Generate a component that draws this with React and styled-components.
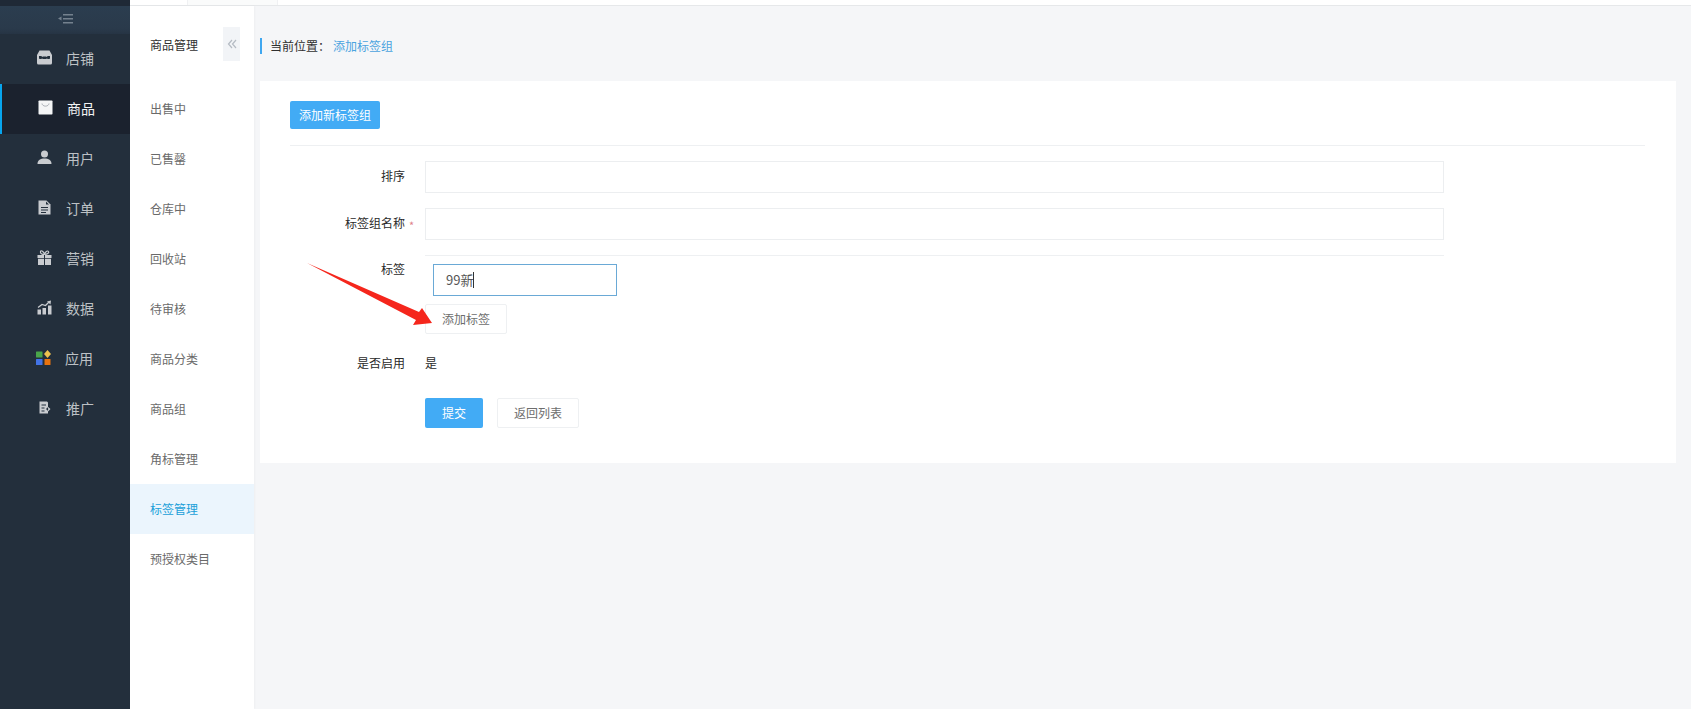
import React from "react";
import styled, { createGlobalStyle } from "styled-components";

const GlobalStyle = createGlobalStyle`
  html, body {
    margin: 0;
    padding: 0;
    height: 100%;
    overflow: hidden;
    background: #f5f6f8;
    font-family: "Noto Sans CJK SC", "Noto Sans", sans-serif;
    font-size: 12px;
  }
  * {
    box-sizing: border-box;
  }
`;

const Page = styled.div`
  position: relative;
  display: flex;
  width: 1691px;
  height: 709px;
  overflow: hidden;
`;

const Sidebar = styled.aside`
  flex: 0 0 130px;
  background: #232f3c;
  border-top: 6px solid #1f2936;
`;

const Collapse = styled.div`
  height: 28px;
  display: flex;
  align-items: center;
  justify-content: center;
  padding-bottom: 3px;
  background: linear-gradient(#2b3d4f, #2a3a4b 80%, #263444);
  color: #74818e;
`;

const NavItem = styled.div`
  height: 50px;
  display: flex;
  align-items: center;
  padding-bottom: 3px;
  gap: 14px;
  font-size: 14px;
  color: ${({ $active }) => ($active ? "#f2f3f4" : "#bdc1c5")};
  background: ${({ $active }) => ($active ? "#1b222e" : "transparent")};
  border-left: ${({ $active }) => ($active ? "2px solid #07a5ee" : "0")};
  padding-left: ${({ $active, $left }) => ($active ? "36px" : `${$left || 37}px`)};
`;

const NavIcon = styled.svg`
  width: 15px;
  height: 15px;
  flex: none;
`;

const Main = styled.div`
  flex: 1;
  display: flex;
  flex-direction: column;
  min-width: 0;
`;

const TopBar = styled.div`
  height: 6px;
  flex: none;
  display: flex;
  background: #fff;
  border-bottom: 1px solid #e6e8ea;
`;

const TopTab = styled.div`
  width: ${({ $w }) => $w}px;
  border-right: 1px solid #f0f1f3;
  background: ${({ $muted }) => ($muted ? "#fafbfb" : "#fff")};
`;

const Body = styled.div`
  flex: 1;
  display: flex;
  min-height: 0;
`;

const SubNav = styled.nav`
  position: relative;
  flex: 0 0 124px;
  background: #fff;
  box-shadow: 1px 0 2px rgba(0, 0, 0, 0.03);
`;

const SubTitle = styled.div`
  height: 78px;
  padding: 31px 0 0 20px;
  line-height: 16px;
  color: #303030;
`;

const SubItem = styled.div`
  height: 50px;
  display: flex;
  align-items: center;
  padding: 0 0 2px 20px;
  color: ${({ $active }) => ($active ? "#1a9fd9" : "#6a6a6a")};
  background: ${({ $active }) => ($active ? "#ebf5fd" : "transparent")};
`;

const FoldButton = styled.div`
  position: absolute;
  top: 21px;
  right: 14px;
  width: 17px;
  height: 34px;
  display: flex;
  align-items: center;
  justify-content: center;
  background: #f2f4f7;
  color: #b5bbc3;
`;

const Content = styled.main`
  flex: 1;
  min-width: 0;
  padding: 32px 15px 0 6px;
`;

const Crumb = styled.div`
  height: 16px;
  display: flex;
  align-items: center;
  border-left: 2px solid #3fa7f0;
  padding: 0 0 2px 8px;
  color: #303030;
  margin-bottom: 27px;
`;

const CrumbLink = styled.span`
  margin-left: 3px;
  color: #4aa3df;
`;

const Card = styled.section`
  height: 382px;
  background: #fff;
  padding: 20px 30px 0;
`;

const Button = styled.div`
  display: inline-flex;
  align-items: center;
  justify-content: center;
  width: ${({ $w }) => $w}px;
  height: ${({ $h }) => $h || 30}px;
  padding-bottom: 1px;
  border-radius: 2px;
  background: ${({ $primary }) => ($primary ? "#42abf5" : "#fff")};
  color: ${({ $primary }) => ($primary ? "#fff" : "#6d6d6d")};
  border: ${({ $primary }) => ($primary ? "0" : "1px solid #eef0f2")};
`;

const Divider = styled.div`
  height: 1px;
  background: #eef0f2;
`;

const HeadDivider = styled(Divider)`
  margin: 16px 0 15px;
  width: 1355px;
`;

const Row = styled.div`
  display: flex;
  margin-bottom: ${({ $gap }) => $gap || 15}px;
  margin-top: ${({ $mt }) => $mt || 0}px;
  align-items: ${({ $top }) => ($top ? "flex-start" : "center")};
`;

const Label = styled.label`
  flex: 0 0 115px;
  text-align: right;
  color: #2a2a2a;
  line-height: 16px;
  margin-right: 20px;
  position: relative;
  top: ${({ $up }) => $up || -1}px;
`;

const Star = styled.span`
  position: absolute;
  left: 119px;
  top: 2px;
  color: #e0808a;
  font-size: 11px;
`;

const Input = styled.div`
  width: 1019px;
  height: 32px;
  border: 1px solid #eceef0;
  background: #fff;
`;

const Field = styled.div`
  margin-left: 135px;
  width: 1019px;
`;

const TagColumn = styled.div`
  display: flex;
  flex-direction: column;
  align-items: flex-start;
`;

const TagInput = styled.div`
  width: 184px;
  height: 32px;
  margin-left: 8px;
  margin-bottom: 8px;
  border: 1px solid #6aa9d6;
  padding: 0 0 1px 12px;
  display: flex;
  align-items: center;
  font-size: 13px;
  color: #555;
`;

const Caret = styled.span`
  width: 1px;
  height: 16px;
  background: #333;
`;

const Value = styled.span`
  color: #2a2a2a;
  position: relative;
  top: -1px;
`;

const Actions = styled.div`
  display: flex;
  gap: 14px;
  margin-left: 135px;
`;

const Arrow = styled.svg`
  position: absolute;
  left: 300px;
  top: 255px;
  width: 145px;
  height: 80px;
  pointer-events: none;
`;

const icons = {
  shop: (
    <>
      <path fill="#c9ccd0" d="M2.500 0.500h10L15 5v8a1.500 1.500 0 0 1-1.500 1.500h-12A1.500 1.500 0 0 1 0 13V5z" />
      <path fill="#232f3c" d="M2 6h2.500l.5 1 1-.5h3l1 .5.500-1H13v2.500c-1 .8-2 .8-3 0-1 .8-4 .8-5 0-1 .8-2 .8-3 0z" />
    </>
  ),
  bag: (
    <>
      <rect x="0.500" y="0.500" width="14" height="14" rx="0.800" fill="#f4f5f6" />
      <path d="M4 3.500c.4 3.500 6.600 3.500 7 0" fill="none" stroke="#8b9199" strokeWidth="0.700" />
    </>
  ),
  user: (
    <>
      <circle cx="7.500" cy="4" r="3.500" fill="#c9ccd0" />
      <path fill="#c9ccd0" d="M0.500 14c0-4 3-5.500 7-5.500s7 1.500 7 5.500z" />
    </>
  ),
  order: (
    <>
      <path fill="#c9ccd0" d="M1.500 0.500h8l4 4v10h-12z" />
      <path fill="#232f3c" d="M4 7h7v1H4zM4 9.500h7v1H4zM4 12h5v1H4zM9 1.500v3h3z" />
    </>
  ),
  gift: (
    <>
      <path fill="#c9ccd0" d="M0.500 5h6.500v3H0.500zM8 5h6.500v3H8zM1 8.800h6V15H1zM8 8.800h6V15H8z" />
      <path fill="none" stroke="#c9ccd0" strokeWidth="1.200" d="M7.500 4.500C5 4.500 3 3.500 3.500 1.500S7 2 7.500 4.500C8 2 10.500 0 11.500 1.500S10 4.500 7.500 4.500z" />
    </>
  ),
  chart: (
    <>
      <path fill="#c9ccd0" d="M0.500 9.500h3.500v5H0.500zM5.500 8H9v6.500H5.500zM11 5.500h3.500v9H11z" />
      <path fill="none" stroke="#c9ccd0" strokeWidth="1.200" d="M1 7.500l4-3 3.500 1L12 2" />
      <path fill="#c9ccd0" d="M10 1.500L14 0.500l-.5 4z" />
    </>
  ),
  apps: (
    <>
      <rect x="0" y="1.500" width="6.500" height="6" rx="0.500" fill="#4aa54a" />
      <path d="M11.500 0l3.500 4-3.500 4-3.500-4z" fill="#eec24e" />
      <rect x="0" y="9" width="6.500" height="6" rx="0.500" fill="#4273e6" />
      <rect x="8.500" y="9" width="6" height="6" rx="0.500" fill="#e8730f" />
    </>
  ),
  promo: (
    <>
      <path fill="#c9ccd0" d="M2.500 1.500h7.500l1 1V7l-2 2 2 2v2.500H2.500z" />
      <path fill="#232f3c" d="M4.500 4.500h4.500v1H4.500zM4.500 7.500h3v1h-3zM4.500 10.500h3v1h-3z" />
      <path fill="#c9ccd0" d="M10.500 6.500l3 2.500-3 3 .8-3z" />
    </>
  ),
};

const navItems = [
  { key: "shop", label: "店铺" },
  { key: "bag", label: "商品", active: true },
  { key: "user", label: "用户" },
  { key: "order", label: "订单" },
  { key: "gift", label: "营销" },
  { key: "chart", label: "数据" },
  { key: "apps", label: "应用", left: 36 },
  { key: "promo", label: "推广" },
];

const subItems = [
  "出售中",
  "已售罄",
  "仓库中",
  "回收站",
  "待审核",
  "商品分类",
  "商品组",
  "角标管理",
  "标签管理",
  "预授权类目",
];

const App = () => (
  <Page>
    <GlobalStyle />
    <Sidebar>
      <Collapse>
        <svg width="15" height="10" viewBox="0 0 15 10" fill="currentColor">
          <path d="M5 0h10v1.500H5zM5 4h10v1.500H5zM5 8h10v1.500H5zM3.500 2.500v4L0 4.500z" />
        </svg>
      </Collapse>
      {navItems.map((item) => (
        <NavItem key={item.key} $active={item.active} $left={item.left}>
          <NavIcon viewBox="0 0 15 15">{icons[item.key]}</NavIcon>
          {item.label}
        </NavItem>
      ))}
    </Sidebar>
    <Main>
      <TopBar>
        <TopTab $w={58} />
        <TopTab $w={90} $muted />
      </TopBar>
      <Body>
        <SubNav>
          <SubTitle>商品管理</SubTitle>
          <FoldButton>
            <svg width="10" height="10" viewBox="0 0 10 10" fill="none" stroke="currentColor" strokeWidth="1.200">
              <path d="M5 1L1.500 5 5 9M9 1L5.500 5 9 9" />
            </svg>
          </FoldButton>
          {subItems.map((label) => (
            <SubItem key={label} $active={label === "标签管理"}>
              {label}
            </SubItem>
          ))}
        </SubNav>
        <Content>
          <Crumb>
            当前位置：<CrumbLink>添加标签组</CrumbLink>
          </Crumb>
          <Card>
            <Button $primary $w={90} $h={28}>
              添加新标签组
            </Button>
            <HeadDivider />
            <Row>
              <Label>排序</Label>
              <Input />
            </Row>
            <Row>
              <Label>
                标签组名称<Star>*</Star>
              </Label>
              <Input />
            </Row>
            <Field>
              <Divider />
            </Field>
            <Row $top $gap={21} $mt={8}>
              <Label $up={-3}>标签</Label>
              <TagColumn>
                <TagInput>
                  99新
                  <Caret />
                </TagInput>
                <Button $w={82}>添加标签</Button>
              </TagColumn>
            </Row>
            <Row $gap={26}>
              <Label>是否启用</Label>
              <Value>是</Value>
            </Row>
            <Actions>
              <Button $primary $w={58}>
                提交
              </Button>
              <Button $w={82}>返回列表</Button>
            </Actions>
          </Card>
        </Content>
      </Body>
    </Main>
    <Arrow viewBox="0 0 145 80">
      <path fill="#f5261c" d="M7 8L119 57 122 53 132 68 113 70 116 65z" />
    </Arrow>
  </Page>
);

export default App;
